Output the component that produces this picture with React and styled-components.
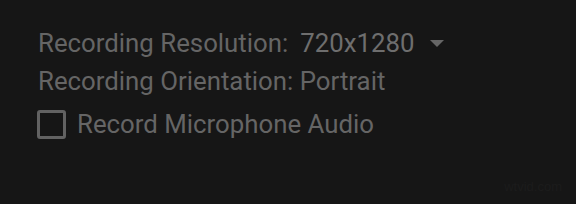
import React from "react";
import styled, { createGlobalStyle } from "styled-components";

const Global = createGlobalStyle`
  html, body { margin: 0; padding: 0; background: #161616; }
  body { width: 576px; height: 204px; overflow: hidden; }
`;

const Panel = styled.div`
  position: relative;
  width: 576px;
  height: 204px;
  box-sizing: border-box;
  padding: 24px 0 0 38px;
  background: #161616;
  font-family: Roboto, "Noto Sans", sans-serif;
  font-size: 25.8px;
  color: #656565;
  display: flex;
  flex-direction: column;
`;

const Row = styled.div`
  display: flex;
  align-items: center;
  height: ${(p) => p.$h || 38}px;
  white-space: nowrap;
`;

const Value = styled.span`
  margin-left: 12px;
  color: #6e6e6e;
`;

const Caret = styled.span`
  margin-left: 15px;
  width: 0;
  height: 0;
  border-left: 7px solid transparent;
  border-right: 7px solid transparent;
  border-top: 7px solid #666;
`;

const Box = styled.span`
  width: 23px;
  height: 23px;
  border: 3px solid #626262;
  border-radius: 3px;
  margin: 1px 11px 0 -1px;
  flex: none;
`;

const Watermark = styled.div`
  position: absolute;
  right: 14px;
  bottom: 10px;
  font-family: "Liberation Sans", Arial, sans-serif;
  font-size: 13px;
  color: #1c1c1c;
`;

export default function App() {
  return (
    <>
      <Global />
      <Panel>
        <Row>
          Recording Resolution:<Value>720x1280</Value>
          <Caret />
        </Row>
        <Row>Recording Orientation: Portrait</Row>
        <Row $h={48}>
          <Box />
          Record Microphone Audio
        </Row>
        <Watermark>wtvid.com</Watermark>
      </Panel>
    </>
  );
}
